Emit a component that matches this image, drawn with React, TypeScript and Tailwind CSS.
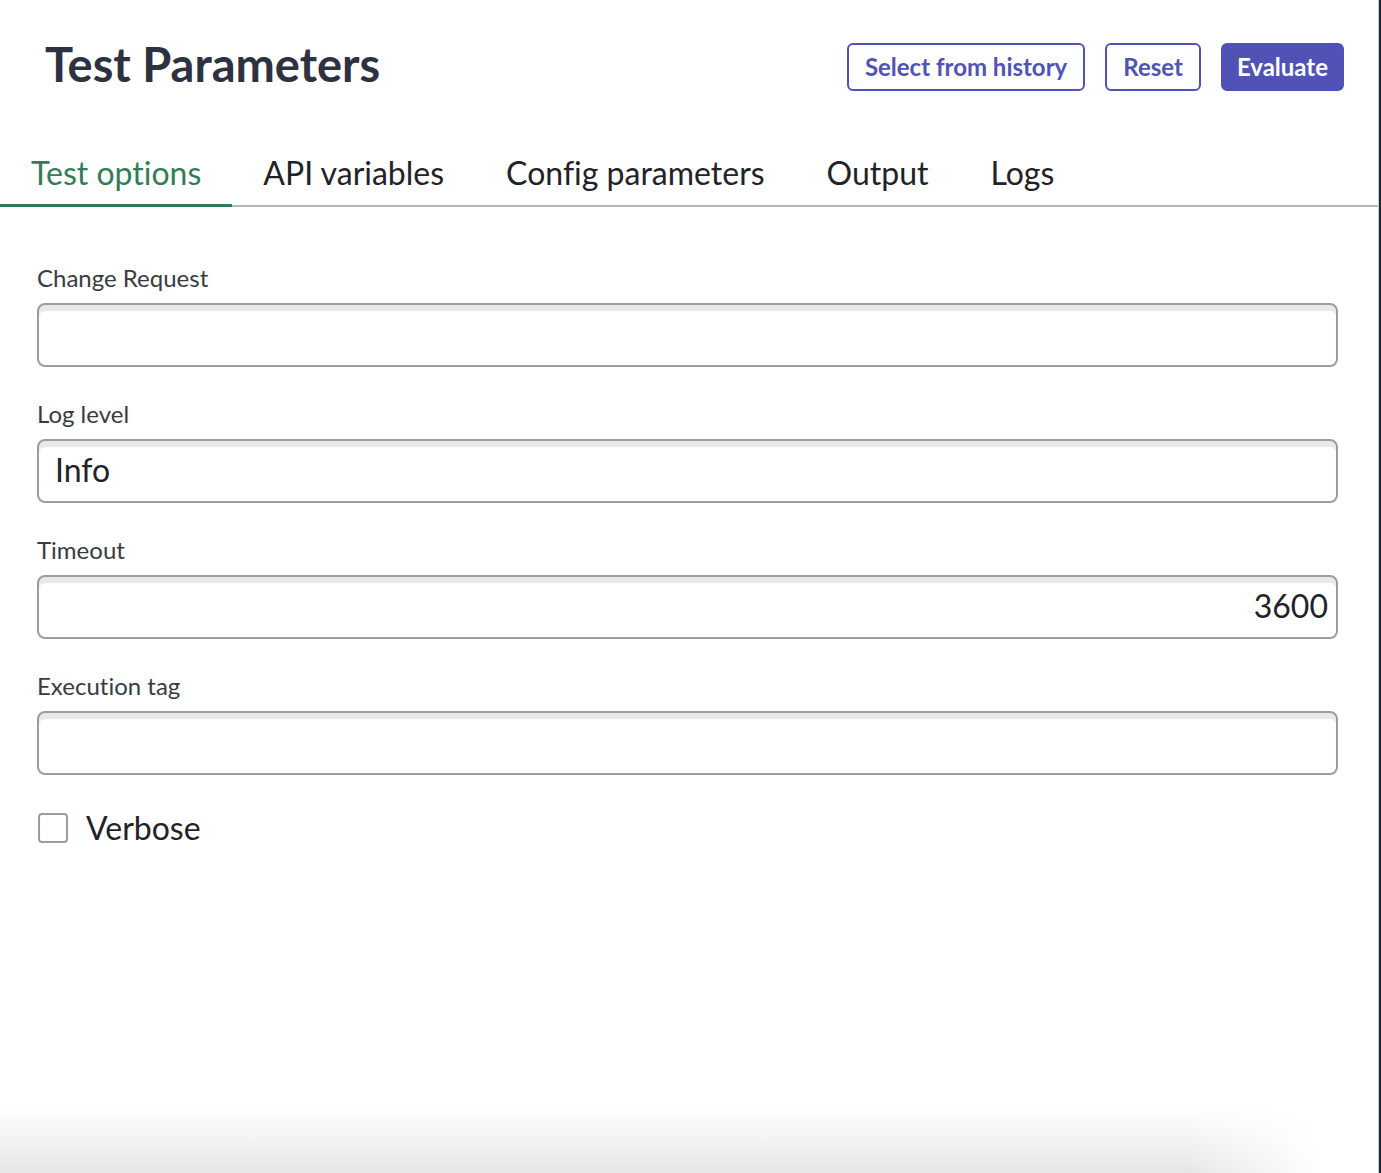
import React, { useState } from 'react';

const tabs = ['Test options', 'API variables', 'Config parameters', 'Output', 'Logs'];

const inputClass =
  'w-full h-16 pb-[4px] rounded-lg border-2 border-[#9b9ca6] bg-white shadow-[inset_0_6px_0_#e8e9ea] text-[32px] text-[#1f2328] outline-none';

const Field: React.FC<{ label: string; children: React.ReactNode }> = ({ label, children }) => (
  <div className="mb-[33px]">
    <label className="block text-[24px] leading-[28px] text-[#383b42] mb-[11px]">{label}</label>
    {children}
  </div>
);

export default function App() {
  const [activeTab, setActiveTab] = useState('Test options');
  const [changeRequest, setChangeRequest] = useState('');
  const [logLevel, setLogLevel] = useState('Info');
  const [timeout, setTimeoutValue] = useState('3600');
  const [tag, setTag] = useState('');
  const [verbose, setVerbose] = useState(false);

  return (
    <div
      className="flex h-[1173px] overflow-hidden bg-white [font-variant-ligatures:none]"
      style={{ fontFamily: 'Lato, "Open Sans", sans-serif' }}
    >
      <div className="relative flex-1 bg-white border-r border-[#c9ccd1]">
        <header className="flex items-start justify-between pl-[45px] pr-[34px] pt-[34px]">
          <h1 className="text-[47px] leading-[60px] font-bold text-[#2d3142]">Test Parameters</h1>
          <div className="flex items-center gap-5 mt-[9px]">
            <button className="h-12 px-4 rounded-md border-2 border-[#5053b5] text-[#5053b5] text-[24px] font-bold bg-white">
              Select from history
            </button>
            <button className="h-12 px-4 rounded-md border-2 border-[#5053b5] text-[#5053b5] text-[24px] font-bold bg-white">
              Reset
            </button>
            <button className="h-12 px-[14px] rounded-md border-2 border-[#5053b5] bg-[#5053b5] text-white text-[24px] font-bold">
              Evaluate
            </button>
          </div>
        </header>

        <nav className="flex mt-[57px] border-b-2 border-[#b1b5bc]">
          {tabs.map((tab) => (
            <button
              key={tab}
              onClick={() => setActiveTab(tab)}
              className={`px-[31px] pt-[2px] pb-[11px] -mb-[2px] text-[32px] leading-[40px] border-b-[3px] ${
                activeTab === tab ? 'border-[#2f7a58] text-[#327c5a]' : 'border-transparent text-[#1f2328]'
              }`}
            >
              {tab}
            </button>
          ))}
        </nav>

        <form className="pt-[57px] pl-[37px] pr-[40px]" onSubmit={(e) => e.preventDefault()}>
          <Field label="Change Request">
            <input className={`${inputClass} px-4`} value={changeRequest} onChange={(e) => setChangeRequest(e.target.value)} />
          </Field>
          <Field label="Log level">
            <input className={`${inputClass} px-4`} value={logLevel} onChange={(e) => setLogLevel(e.target.value)} />
          </Field>
          <Field label="Timeout">
            <input
              className={`${inputClass} px-2 text-right`}
              value={timeout}
              onChange={(e) => setTimeoutValue(e.target.value)}
            />
          </Field>
          <Field label="Execution tag">
            <input className={`${inputClass} px-4`} value={tag} onChange={(e) => setTag(e.target.value)} />
          </Field>

          <label className="flex items-center gap-[18px] w-fit cursor-pointer">
            <input
              type="checkbox"
              checked={verbose}
              onChange={(e) => setVerbose(e.target.checked)}
              className="appearance-none w-[30px] h-[30px] ml-px rounded border-2 border-[#9b9ca6] bg-white checked:bg-[#5053b5]"
            />
            <span className="text-[32px] leading-[40px] text-[#1f2328]">Verbose</span>
          </label>
        </form>

        <div className="pointer-events-none absolute bottom-0 left-0 right-0 h-[66px] bg-gradient-to-b from-white/0 to-[#e6e6e6] [mask-image:linear-gradient(to_right,black_86%,transparent_96%)]" />
      </div>
      <div className="w-[2px] bg-[#1c2735]" />
    </div>
  );
}
